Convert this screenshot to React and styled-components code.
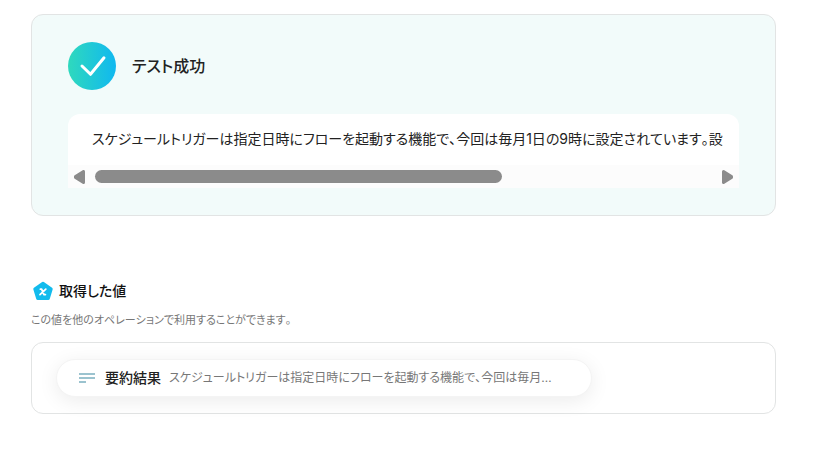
import React from "react";
import styled, { createGlobalStyle } from "styled-components";

const SUMMARY =
  "スケジュールトリガーは指定日時にフローを起動する機能で、今回は毎月1日の9時に設定されています。設";

const App = () => {
  const textRef = React.useRef(null);

  const scrollText = (amount) => {
    textRef.current.scrollBy({ left: amount });
  };

  return (
    <>
      <GlobalStyle />
      <Page>
        <ResultCard>
          <ResultHeader>
            <CheckIcon />
            <ResultTitle>テスト成功</ResultTitle>
          </ResultHeader>
          <Output>
            <OutputText ref={textRef}>{SUMMARY}</OutputText>
            <ScrollBar>
              <ScrollButton
                type="button"
                aria-label="左へスクロール"
                onClick={() => scrollText(-40)}
              >
                <ArrowIcon />
              </ScrollButton>
              <Track>
                <Thumb />
              </Track>
              <ScrollButton
                type="button"
                aria-label="右へスクロール"
                $flip
                onClick={() => scrollText(40)}
              >
                <ArrowIcon />
              </ScrollButton>
            </ScrollBar>
          </Output>
        </ResultCard>

        <Values>
          <ValuesHeader>
            <VariableIcon />
            <ValuesTitle>取得した値</ValuesTitle>
          </ValuesHeader>
          <Description>
            この値を他のオペレーションで利用することができます。
          </Description>
          <ValuesCard>
            <Chip>
              <LinesIcon />
              <ChipLabel>要約結果</ChipLabel>
              <ChipValue>{SUMMARY}</ChipValue>
            </Chip>
          </ValuesCard>
        </Values>
      </Page>
    </>
  );
};

const CheckIcon = () => (
  <Icon width="48" height="48" viewBox="0 0 48 48" aria-hidden="true">
    <defs>
      <linearGradient id="check-fill" x1="0" y1="0" x2="1" y2="0">
        <stop offset="0" stopColor="#2fd9bd" />
        <stop offset="1" stopColor="#10b8f0" />
      </linearGradient>
    </defs>
    <circle cx="24" cy="24" r="24" fill="url(#check-fill)" />
    <path
      d="M14 24 22.5 32.3 36 15.8"
      fill="none"
      stroke="#fff"
      strokeWidth="3"
      strokeLinecap="round"
      strokeLinejoin="round"
    />
  </Icon>
);

const ArrowIcon = () => (
  <Icon width="11" height="14" viewBox="0 0 11 14" aria-hidden="true">
    <path
      d="M9.5 1.5v11L1.5 7.4v-.8z"
      fill="#8b8b8b"
      stroke="#8b8b8b"
      strokeWidth="3"
      strokeLinejoin="round"
    />
  </Icon>
);

const VariableIcon = () => (
  <Icon width="20" height="20" viewBox="0 0 20 20" aria-hidden="true">
    <path
      d="M10 2.2 18.2 8 15.3 17.6H4.7L1.8 8z"
      fill="#12bbed"
      stroke="#12bbed"
      strokeWidth="3"
      strokeLinejoin="round"
    />
    <path
      d="M7.4 8.2h1.2l2.4 5.4h1.4M12.8 8.2 7 13.6"
      fill="none"
      stroke="#fff"
      strokeWidth="1.8"
      strokeLinecap="round"
      strokeLinejoin="round"
    />
  </Icon>
);

const LinesIcon = () => (
  <Icon width="16" height="10" viewBox="0 0 16 10" aria-hidden="true">
    <path d="M0 0h16v2H0zM0 4h16v2H0zM0 8h7v2H0z" fill="#9bc3cf" />
  </Icon>
);

const GlobalStyle = createGlobalStyle`
  * {
    box-sizing: border-box;
  }

  body {
    margin: 0;
    background: #ffffff;
    color: #222222;
    font-family: Inter, "Noto Sans CJK JP", sans-serif;
    font-feature-settings: "palt";
    font-kerning: none;
  }
`;

const Icon = styled.svg`
  display: block;
  flex-shrink: 0;
`;

const Page = styled.main`
  padding: 14px 41px 40px 31px;
`;

const ResultCard = styled.section`
  padding: 27px 36px;
  background: #f2fbfa;
  border: 1px solid #e2e4e4;
  border-radius: 12px;
`;

const ResultHeader = styled.div`
  display: flex;
  align-items: center;
  gap: 16px;
`;

const ResultTitle = styled.h2`
  margin: 0;
  font-size: 16px;
  line-height: 24px;
  font-weight: 500;
`;

const Output = styled.div`
  margin-top: 24px;
  background: #ffffff;
  border-radius: 12px 12px 0 0;
  overflow: hidden;
`;

const OutputText = styled.div`
  padding: 13px 0 14px 24px;
  font-size: 14px;
  line-height: 24px;
  white-space: nowrap;
  overflow: hidden;
`;

const ScrollBar = styled.div`
  display: flex;
  align-items: center;
  height: 23px;
  padding: 0 6px;
  gap: 10px;
  background: #fcfcfc;
`;

const ScrollButton = styled.button`
  padding: 0;
  border: 0;
  background: none;
  cursor: pointer;
  transform: ${(props) => (props.$flip ? "rotate(180deg)" : "none")};
`;

const Track = styled.div`
  flex: 1;
`;

const Thumb = styled.div`
  width: 66%;
  height: 13px;
  background: #8b8b8b;
  border-radius: 7px;
`;

const Values = styled.section`
  margin-top: 64px;
`;

const ValuesHeader = styled.div`
  display: flex;
  align-items: center;
  gap: 6px;
  padding-left: 2px;
`;

const ValuesTitle = styled.h3`
  margin: 0;
  color: #111111;
  font-size: 14px;
  line-height: 22px;
  font-weight: 500;
`;

const Description = styled.p`
  margin: 9px 0 13px;
  color: #777777;
  font-size: 11px;
  line-height: 18px;
`;

const ValuesCard = styled.div`
  padding: 16px 24px;
  border: 1px solid #e2e4e4;
  border-radius: 12px;
`;

const Chip = styled.div`
  display: flex;
  align-items: center;
  width: 536px;
  max-width: 100%;
  height: 38px;
  padding: 0 22px;
  border: 1px solid #f4f4f4;
  border-radius: 19px;
  background: #ffffff;
  box-shadow: 0 4px 20px rgba(0, 0, 0, 0.08);
`;

const ChipLabel = styled.span`
  flex-shrink: 0;
  margin: 0 8px 0 10px;
  font-size: 14px;
  line-height: 20px;
  font-weight: 500;
`;

const ChipValue = styled.span`
  min-width: 0;
  max-width: 384px;
  color: #777777;
  font-size: 12px;
  line-height: 20px;
  white-space: nowrap;
  overflow: hidden;
  text-overflow: ellipsis;
`;

export default App;
